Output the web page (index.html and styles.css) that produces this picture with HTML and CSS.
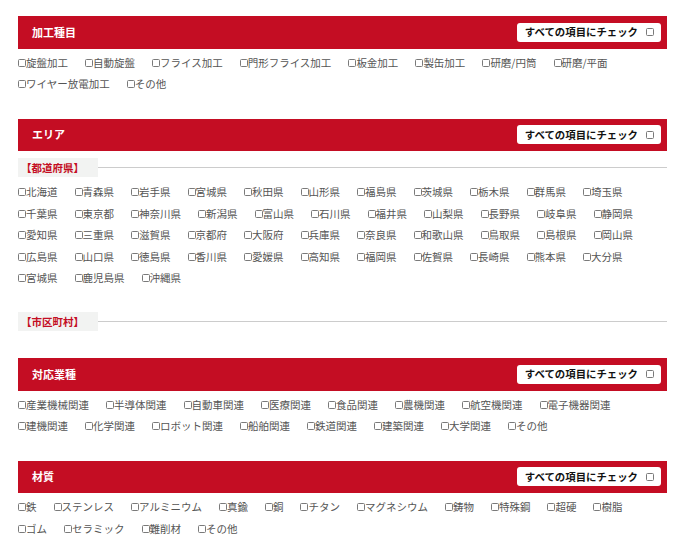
FILE: index.html
```
<!DOCTYPE html>
<html lang="ja">
<head>
<meta charset="utf-8">
<title>検索条件</title>
<link rel="stylesheet" href="styles.css">
</head>
<body>
<div class="page">

  <section class="group">
    <div class="bar">
      <h2 class="bar-title">加工種目</h2>
      <label class="check-all">すべての項目にチェック<span class="cb"></span></label>
    </div>
    <ul class="opts">
      <li class="opt"><span class="cb"></span>旋盤加工</li>
      <li class="opt"><span class="cb"></span>自動旋盤</li>
      <li class="opt"><span class="cb"></span>フライス加工</li>
      <li class="opt"><span class="cb"></span>門形フライス加工</li>
      <li class="opt"><span class="cb"></span>板金加工</li>
      <li class="opt"><span class="cb"></span>製缶加工</li>
      <li class="opt"><span class="cb"></span>研磨/円筒</li>
      <li class="opt"><span class="cb"></span>研磨/平面</li>
      <li class="opt"><span class="cb"></span>ワイヤー放電加工</li>
      <li class="opt"><span class="cb"></span>その他</li>
    </ul>
  </section>

  <section class="group">
    <div class="bar">
      <h2 class="bar-title">エリア</h2>
      <label class="check-all">すべての項目にチェック<span class="cb"></span></label>
    </div>
    <div class="sub"><span class="sub-label">【都道府県】</span></div>
    <ul class="opts opts-sub">
      <li class="opt"><span class="cb"></span>北海道</li>
      <li class="opt"><span class="cb"></span>青森県</li>
      <li class="opt"><span class="cb"></span>岩手県</li>
      <li class="opt"><span class="cb"></span>宮城県</li>
      <li class="opt"><span class="cb"></span>秋田県</li>
      <li class="opt"><span class="cb"></span>山形県</li>
      <li class="opt"><span class="cb"></span>福島県</li>
      <li class="opt"><span class="cb"></span>茨城県</li>
      <li class="opt"><span class="cb"></span>栃木県</li>
      <li class="opt"><span class="cb"></span>群馬県</li>
      <li class="opt"><span class="cb"></span>埼玉県</li>
      <li class="opt"><span class="cb"></span>千葉県</li>
      <li class="opt"><span class="cb"></span>東京都</li>
      <li class="opt"><span class="cb"></span>神奈川県</li>
      <li class="opt"><span class="cb"></span>新潟県</li>
      <li class="opt"><span class="cb"></span>富山県</li>
      <li class="opt"><span class="cb"></span>石川県</li>
      <li class="opt"><span class="cb"></span>福井県</li>
      <li class="opt"><span class="cb"></span>山梨県</li>
      <li class="opt"><span class="cb"></span>長野県</li>
      <li class="opt"><span class="cb"></span>岐阜県</li>
      <li class="opt"><span class="cb"></span>静岡県</li>
      <li class="opt"><span class="cb"></span>愛知県</li>
      <li class="opt"><span class="cb"></span>三重県</li>
      <li class="opt"><span class="cb"></span>滋賀県</li>
      <li class="opt"><span class="cb"></span>京都府</li>
      <li class="opt"><span class="cb"></span>大阪府</li>
      <li class="opt"><span class="cb"></span>兵庫県</li>
      <li class="opt"><span class="cb"></span>奈良県</li>
      <li class="opt"><span class="cb"></span>和歌山県</li>
      <li class="opt"><span class="cb"></span>鳥取県</li>
      <li class="opt"><span class="cb"></span>島根県</li>
      <li class="opt"><span class="cb"></span>岡山県</li>
      <li class="opt"><span class="cb"></span>広島県</li>
      <li class="opt"><span class="cb"></span>山口県</li>
      <li class="opt"><span class="cb"></span>徳島県</li>
      <li class="opt"><span class="cb"></span>香川県</li>
      <li class="opt"><span class="cb"></span>愛媛県</li>
      <li class="opt"><span class="cb"></span>高知県</li>
      <li class="opt"><span class="cb"></span>福岡県</li>
      <li class="opt"><span class="cb"></span>佐賀県</li>
      <li class="opt"><span class="cb"></span>長崎県</li>
      <li class="opt"><span class="cb"></span>熊本県</li>
      <li class="opt"><span class="cb"></span>大分県</li>
      <li class="opt"><span class="cb"></span>宮城県</li>
      <li class="opt"><span class="cb"></span>鹿児島県</li>
      <li class="opt"><span class="cb"></span>沖縄県</li>
    </ul>
    <div class="sub sub-next"><span class="sub-label">【市区町村】</span></div>
    <ul class="opts opts-empty"></ul>
  </section>

  <section class="group">
    <div class="bar">
      <h2 class="bar-title">対応業種</h2>
      <label class="check-all">すべての項目にチェック<span class="cb"></span></label>
    </div>
    <ul class="opts">
      <li class="opt"><span class="cb"></span>産業機械関連</li>
      <li class="opt"><span class="cb"></span>半導体関連</li>
      <li class="opt"><span class="cb"></span>自動車関連</li>
      <li class="opt"><span class="cb"></span>医療関連</li>
      <li class="opt"><span class="cb"></span>食品関連</li>
      <li class="opt"><span class="cb"></span>農機関連</li>
      <li class="opt"><span class="cb"></span>航空機関連</li>
      <li class="opt"><span class="cb"></span>電子機器関連</li>
      <li class="opt"><span class="cb"></span>建機関連</li>
      <li class="opt"><span class="cb"></span>化学関連</li>
      <li class="opt"><span class="cb"></span>ロボット関連</li>
      <li class="opt"><span class="cb"></span>船舶関連</li>
      <li class="opt"><span class="cb"></span>鉄道関連</li>
      <li class="opt"><span class="cb"></span>建築関連</li>
      <li class="opt"><span class="cb"></span>大学関連</li>
      <li class="opt"><span class="cb"></span>その他</li>
    </ul>
  </section>

  <section class="group">
    <div class="bar">
      <h2 class="bar-title">材質</h2>
      <label class="check-all">すべての項目にチェック<span class="cb"></span></label>
    </div>
    <ul class="opts">
      <li class="opt"><span class="cb"></span>鉄</li>
      <li class="opt"><span class="cb"></span>ステンレス</li>
      <li class="opt"><span class="cb"></span>アルミニウム</li>
      <li class="opt"><span class="cb"></span>真鍮</li>
      <li class="opt"><span class="cb"></span>銅</li>
      <li class="opt"><span class="cb"></span>チタン</li>
      <li class="opt"><span class="cb"></span>マグネシウム</li>
      <li class="opt"><span class="cb"></span>鋳物</li>
      <li class="opt"><span class="cb"></span>特殊鋼</li>
      <li class="opt"><span class="cb"></span>超硬</li>
      <li class="opt"><span class="cb"></span>樹脂</li>
      <li class="opt"><span class="cb"></span>ゴム</li>
      <li class="opt"><span class="cb"></span>セラミック</li>
      <li class="opt"><span class="cb"></span>難削材</li>
      <li class="opt"><span class="cb"></span>その他</li>
    </ul>
  </section>

</div>
</body>
</html>
```

FILE: styles.css
```
html, body {
  margin: 0;
  padding: 0;
  background: #ffffff;
}

body {
  font-family: "Noto Sans CJK JP", "Noto Sans", sans-serif;
  color: #555555;
}

.page {
  width: 649px;
  padding: 16px 0 0 18px;
}

.group {
  margin-bottom: 24px;
}

.bar {
  height: 32.5px;
  background: #c40d23;
  display: flex;
  align-items: center;
  justify-content: space-between;
  padding: 0 6px 0 14px;
}

.bar-title {
  margin: 0;
  font-size: 11px;
  font-weight: bold;
  color: #ffffff;
  line-height: 1;
}

.check-all {
  display: flex;
  align-items: center;
  height: 19px;
  padding: 0 7px 0 8px;
  background: #ffffff;
  border-radius: 3px;
  font-size: 10.4px;
  font-weight: bold;
  color: #111111;
  line-height: 1;
}

.check-all .cb {
  margin-left: 8px;
}

.cb {
  display: inline-block;
  box-sizing: border-box;
  width: 8px;
  height: 8px;
  border: 1px solid #7a7a7a;
  border-radius: 1.5px;
  background: #ffffff;
  flex: none;
}

.opts {
  list-style: none;
  margin: 3px 0 0;
  padding: 0;
  display: flex;
  flex-wrap: wrap;
}

.opts-sub {
  margin-top: 4px;
}

.opts-empty {
  margin-top: 3px;
}

.opt {
  display: inline-flex;
  align-items: center;
  height: 21.5px;
  font-size: 10.5px;
  line-height: 21.5px;
  margin-right: 17px;
  color: #555555;
  white-space: nowrap;
}

.opt .cb {
  margin-top: 1px;
}

.sub {
  display: flex;
  align-items: center;
  margin-top: 7px;
}

.sub::after {
  content: "";
  flex: 1;
  height: 1px;
  background: #cccccc;
}

.sub-next {
  margin-top: 23.5px;
}

.sub-label {
  display: block;
  height: 19px;
  line-height: 19px;
  padding: 0 14px 0 3px;
  background: #f2f3f2;
  color: #c40d23;
  font-size: 10.5px;
  font-weight: bold;
}
```
